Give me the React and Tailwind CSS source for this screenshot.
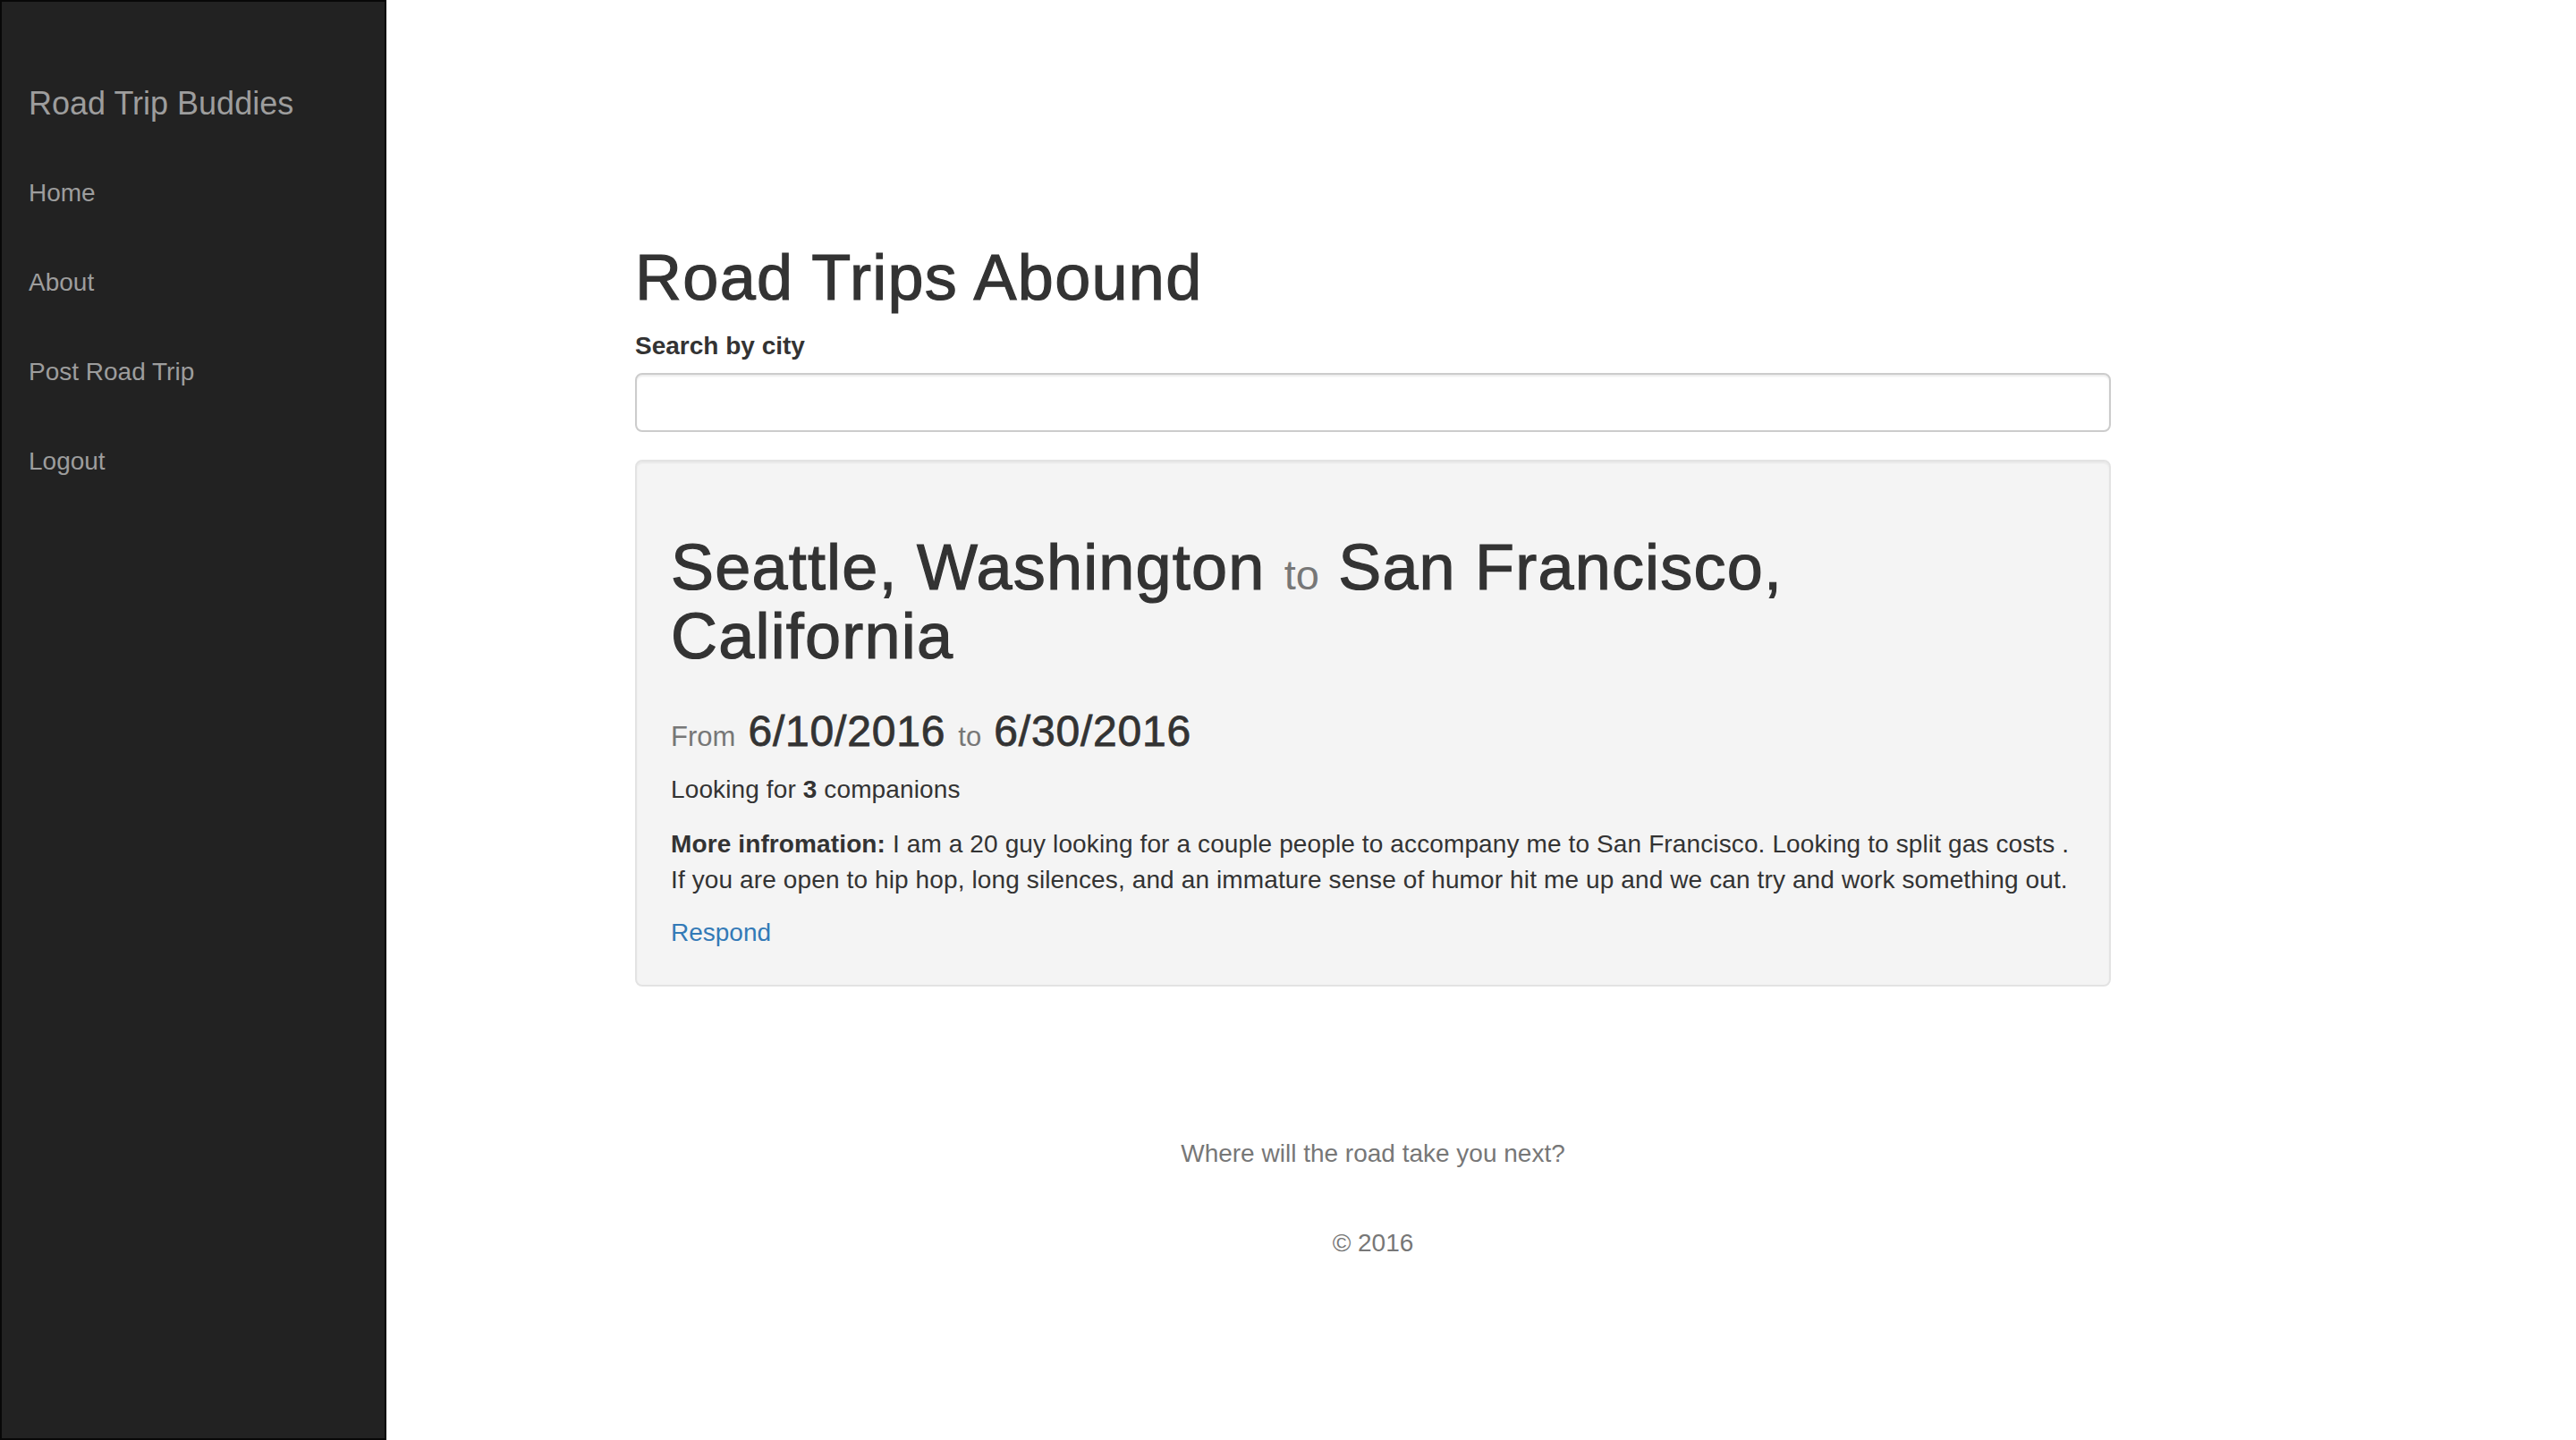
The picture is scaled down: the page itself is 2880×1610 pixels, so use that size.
export default function App() {
  const font = { fontFamily: '"Liberation Sans", Arial, Helvetica, sans-serif' };
  return (
    <div className="flex min-h-screen bg-white text-[#333]" style={font}>
      <aside className="w-[432px] shrink-0 min-h-screen bg-[#222] border-2 border-[#080808]">
        <div className="pl-[30px] pt-[94px] text-[36px] leading-[40px] text-[#9d9d9d]">Road Trip Buddies</div>
        <nav className="mt-[30px] flex flex-col">
          {['Home', 'About', 'Post Road Trip', 'Logout'].map((t) => (
            <a key={t} href="#" className="block pl-[30px] py-[30px] text-[28px] leading-[40px] text-[#9d9d9d]">
              {t}
            </a>
          ))}
        </nav>
      </aside>
      <main className="flex-1 pl-[278px]">
        <div className="w-[1650px]">
          <h1 className="mt-[271px] text-[72px] leading-[79px] tracking-[1.3px] [-webkit-text-stroke:1.2px_#333]">Road Trips Abound</h1>
          <label className="block mt-[17px] text-[28px] leading-[40px] font-bold">Search by city</label>
          <input
            type="text"
            className="mt-[10px] block w-full h-[66px] rounded-[8px] border-2 border-[#ccc] bg-white px-[24px] text-[28px] shadow-[inset_0_2px_2px_rgba(0,0,0,0.075)] outline-none"
          />
          <div className="mt-[31px] rounded-[8px] border-2 border-[#e3e3e3] bg-[#f4f4f4] px-[38px] pt-[38px] pb-[38px] shadow-[inset_0_2px_2px_rgba(0,0,0,0.05)]">
            <h1 className="mt-[42px] text-[72px] leading-[77px] tracking-[1.2px] [-webkit-text-stroke:1.2px_#333]">
              Seattle, Washington{' '}
              <small className="text-[47px] leading-none text-[#777] tracking-normal [-webkit-text-stroke:0]">to</small>{' '}
              San Francisco,
              <br />
              California
            </h1>
            <h3 className="mt-[41px] text-[48px] leading-[53px] tracking-[0.8px] [-webkit-text-stroke:0.8px_#333]">
              <small className="text-[31px] leading-none text-[#777] tracking-normal [-webkit-text-stroke:0]">From</small> 6/10/2016{' '}
              <small className="text-[31px] leading-none text-[#777] tracking-normal [-webkit-text-stroke:0]">to</small> 6/30/2016
            </h3>
            <p className="mt-[19px] text-[28px] leading-[40px] tracking-[0.12px]">
              Looking for <b>3</b> companions
            </p>
            <p className="mt-[21px] text-[28px] leading-[40px] tracking-[0.12px] whitespace-nowrap">
              <b>More infromation:</b> I am a 20 guy looking for a couple people to accompany me to San Francisco. Looking to split gas costs .
              <br />
              If you are open to hip hop, long silences, and an immature sense of humor hit me up and we can try and work something out.
            </p>
            <p className="mt-[19px] text-[28px] leading-[40px]">
              <a href="#" className="text-[#337ab7]">Respond</a>
            </p>
          </div>
          <footer className="text-center text-[#777] text-[28px] leading-[40px]">
            <p className="mt-[167px]">Where will the road take you next?</p>
            <p className="mt-[60px]">© 2016</p>
          </footer>
        </div>
      </main>
    </div>
  );
}
